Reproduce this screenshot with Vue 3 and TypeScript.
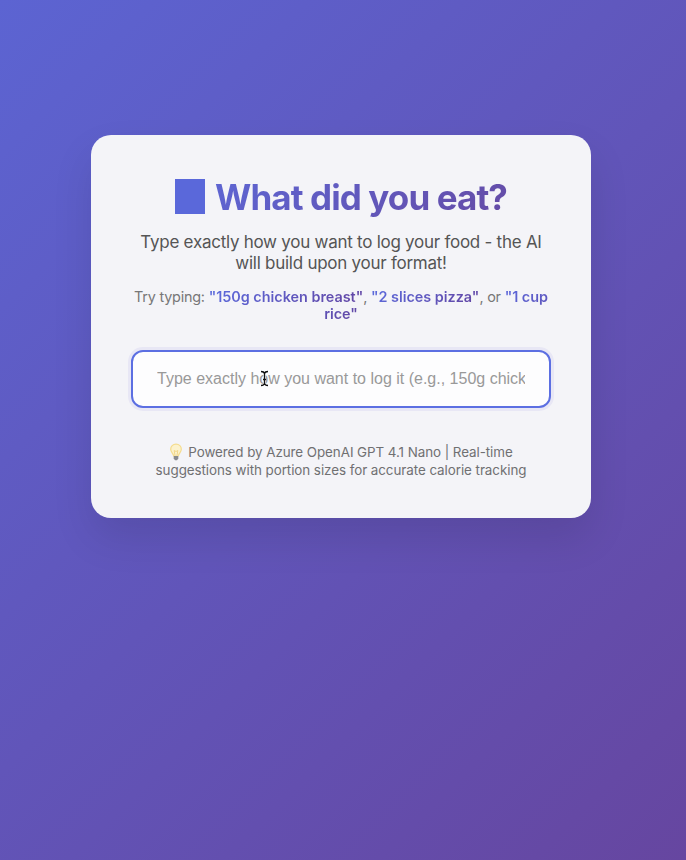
<script setup lang="ts">
const examples: string[] = ['"150g chicken breast"', '"2 slices pizza"']
</script>

<template>
  <main class="page">
    <section class="card">
      <h1 class="title"><span class="tile"></span><span class="title-text">What did you eat?</span></h1>
      <p class="subtitle">Type exactly how you want to log your food - the AI<br />will build upon your format!</p>
      <p class="examples">
        <span class="line">Try typing: <b>{{ examples[0] }}</b>, <b>{{ examples[1] }}</b>, or <b class="start">"1 cup</b></span>
        <span class="line"><b class="end">rice"</b></span>
      </p>
      <div class="field">
        <input class="input" type="text" placeholder="Type exactly how you want to log it (e.g., 150g chicken breast)" />
        <svg class="cursor" viewBox="0 0 9 17" width="9" height="17">
          <path d="M1 1.5Q4 1.5 4.5 3.5Q5 1.5 8 1.5M4.5 3.5V13.5M1 15.5Q4 15.5 4.5 13.5Q5 15.5 8 15.5M3 9.5H6" fill="none" stroke="#fff" stroke-width="2.4" />
          <path d="M1 1.5Q4 1.5 4.5 3.5Q5 1.5 8 1.5M4.5 3.5V13.5M1 15.5Q4 15.5 4.5 13.5Q5 15.5 8 15.5M3 9.5H6" fill="none" stroke="#111" stroke-width="1.3" />
        </svg>
      </div>
      <p class="footer">
        <span class="line"><svg class="bulb" viewBox="0 0 14 18" width="14" height="18">
          <path d="M7 1.2C3.8 1.2 1.7 3.4 1.7 6.3C1.7 9 4.2 10.2 4.7 13H9.3C9.8 10.2 12.3 9 12.3 6.3C12.3 3.4 10.2 1.2 7 1.2Z" fill="#fcf2cd" stroke="#f5dc8d" stroke-width="1.2" />
          <path d="M6 12.5L5.2 7.5L7 8.5L8.8 7.5L8 12.5" fill="none" stroke="#efcf78" stroke-width=".8" />
          <path d="M4.7 13H9.3V15.5L8 17.2H6L4.7 15.5Z" fill="#8a8b8e" />
        </svg>Powered by Azure OpenAI GPT 4.1 Nano | Real-time</span>
        <span class="line">suggestions with portion sizes for accurate calorie tracking</span>
      </p>
    </section>
  </main>
</template>

<style>
body { margin: 0; }
</style>
<style scoped>
.page { box-sizing: border-box; width: 686px; height: 860px; padding: 135px 95px 0 91px; overflow: hidden; background: linear-gradient(135deg, #5c64d2 0%, #6646a0 100%); font-family: Inter, "Liberation Sans", sans-serif; }
.card { box-sizing: border-box; width: 500px; height: 383px; padding: 39px 40px 40px; border-radius: 20px; background: #f4f4f8; box-shadow: 0 20px 40px rgba(0, 0, 0, .1); text-align: center; }
.title { display: flex; justify-content: center; align-items: center; gap: 10px; height: 46px; margin: 0; font-size: 35px; line-height: 46px; font-weight: 700; white-space: nowrap; background: linear-gradient(135deg, #5c6cde, #6648a0); background-clip: text; color: transparent; }
.tile { width: 30px; height: 35px; margin-bottom: 2px; background: #5a68da; }
.title-text { letter-spacing: -.9px; }
.subtitle { margin: 12px 0 0; color: #555; font-size: 17px; line-height: 21px; white-space: nowrap; letter-spacing: -.26px; }
.examples { margin: 14px 0 0; color: #777; font-size: 14.4px; line-height: 17px; white-space: nowrap; letter-spacing: -.21px; }
.examples b { font-weight: 600; letter-spacing: -.01px; background: linear-gradient(135deg, #5c6cde, #6244a2); background-clip: text; color: transparent; }
.examples .start { background-image: linear-gradient(135deg, #5c68dc, #5e56bd); }
.examples .end { background-image: linear-gradient(135deg, #5e54b8, #6244a2); }
.line { display: block; }
.field { position: relative; margin-top: 28px; }
.input { display: block; box-sizing: border-box; width: 420px; height: 58px; padding: 0 24px; border: 2px solid #5c6fe2; border-radius: 12px; outline: none; background: #fdfdfe; box-shadow: 0 0 0 3px #e8e7f5; font: 16px "Liberation Sans", sans-serif; }
.input::placeholder { color: #999; opacity: 1; }
.cursor { position: absolute; left: 129px; top: 20px; }
.footer { margin: 35px 0 0; color: #707072; font-size: 13.4px; line-height: 18px; white-space: nowrap; letter-spacing: -.06px; }
.bulb { margin-right: 5px; vertical-align: -4px; }
</style>
